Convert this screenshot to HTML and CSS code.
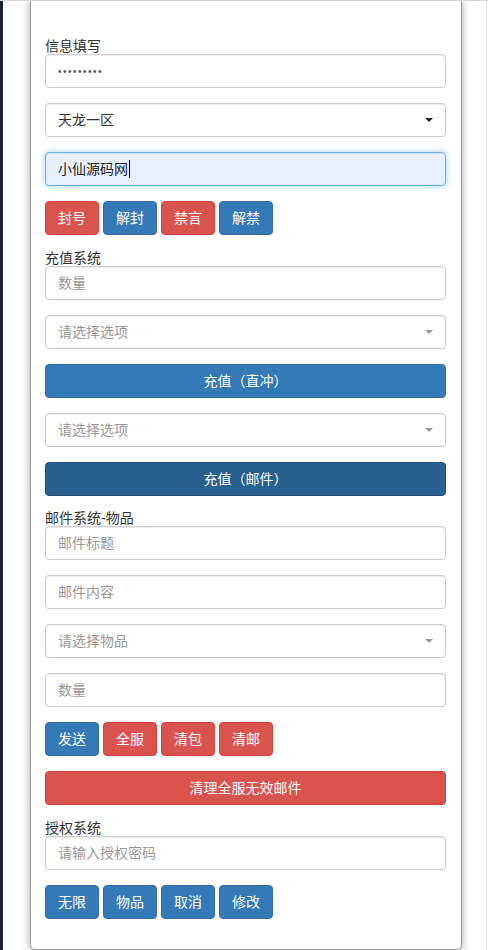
FILE: index.html
```html
<!DOCTYPE html>
<html lang="zh-CN">
<head>
<meta charset="utf-8">
<title>管理面板</title>
<link rel="stylesheet" href="styles.css">
</head>
<body>
<div class="card">
  <div class="section">
    <label class="label" for="pwd">信息填写</label>
    <div class="form-group">
      <input id="pwd" class="form-control pwd" type="password" value="123456789">
    </div>
    <div class="form-group select-wrap">
      <select class="form-control"><option>天龙一区</option></select>
    </div>
    <div class="form-group">
      <div class="form-control focused" role="textbox">小仙源码网<span class="caret"></span></div>
    </div>
    <div class="form-group btn-row">
      <button class="btn btn-danger">封号</button>
      <button class="btn btn-primary">解封</button>
      <button class="btn btn-danger">禁言</button>
      <button class="btn btn-primary">解禁</button>
    </div>
  </div>

  <div class="section">
    <label class="label">充值系统</label>
    <div class="form-group">
      <input class="form-control" type="text" placeholder="数量">
    </div>
    <div class="form-group select-wrap muted">
      <select class="form-control placeholder"><option>请选择选项</option></select>
    </div>
    <div class="form-group">
      <button class="btn btn-primary btn-block">充值（直冲）</button>
    </div>
    <div class="form-group select-wrap muted">
      <select class="form-control placeholder"><option>请选择选项</option></select>
    </div>
    <div class="form-group tight">
      <button class="btn btn-primary btn-block active">充值（邮件）</button>
    </div>
  </div>

  <div class="section">
    <label class="label">邮件系统-物品</label>
    <div class="form-group">
      <input class="form-control" type="text" placeholder="邮件标题">
    </div>
    <div class="form-group">
      <input class="form-control" type="text" placeholder="邮件内容">
    </div>
    <div class="form-group select-wrap muted">
      <select class="form-control placeholder"><option>请选择物品</option></select>
    </div>
    <div class="form-group">
      <input class="form-control" type="text" placeholder="数量">
    </div>
    <div class="form-group btn-row">
      <button class="btn btn-primary">发送</button>
      <button class="btn btn-danger">全服</button>
      <button class="btn btn-danger">清包</button>
      <button class="btn btn-danger">清邮</button>
    </div>
    <div class="form-group">
      <button class="btn btn-danger btn-block">清理全服无效邮件</button>
    </div>
  </div>

  <div class="section">
    <label class="label">授权系统</label>
    <div class="form-group">
      <input class="form-control" type="text" placeholder="请输入授权密码">
    </div>
    <div class="form-group btn-row">
      <button class="btn btn-primary">无限</button>
      <button class="btn btn-primary">物品</button>
      <button class="btn btn-primary">取消</button>
      <button class="btn btn-primary">修改</button>
    </div>
  </div>
</div>
</body>
</html>
```

FILE: styles.css
```css
* { box-sizing: border-box; }

html, body {
  margin: 0;
  padding: 0;
  height: 950px;
  overflow: hidden;
}

body {
  font-family: "Liberation Sans", "Noto Sans CJK SC", sans-serif;
  font-size: 14px;
  color: #333;
  border-top: 1px solid #d9d9d9;
  background: linear-gradient(to right, #1d2233 0 3px, #fff 3px 486px, #e4e4e4 486px 487px, #fff 487px);
}

.card {
  width: 432px;
  margin-left: 30px;
  background: #fff;
  border: 1px solid #9a9a9a;
  border-top: none;
  border-radius: 0 0 5px 5px;
  box-shadow: 0 0 9px rgba(0, 0, 0, 0.35);
  padding: 37px 15px 15px 14px;
}

.label {
  display: block;
  line-height: 16px;
  font-size: 14px;
  color: #333;
}

.form-group {
  margin-bottom: 15px;
}

.form-group.tight {
  margin-bottom: 14px;
}

.form-control {
  display: block;
  width: 100%;
  height: 34px;
  padding: 6px 12px;
  font-family: inherit;
  font-size: 14px;
  line-height: 20px;
  color: #555;
  background: #fff;
  border: 1px solid #ccc;
  border-radius: 4px;
  box-shadow: inset 0 1px 1px rgba(0, 0, 0, 0.075);
  outline: none;
}

.form-control::placeholder { color: #999; }

.pwd {
  letter-spacing: 1.5px;
  font-size: 10px;
}

.focused {
  color: #222;
  background: #e8f0fe;
  border-color: #66afe9;
  box-shadow: inset 0 1px 1px rgba(0, 0, 0, 0.075), 0 0 6px rgba(102, 175, 233, 0.6);
}

.caret {
  display: inline-block;
  width: 1px;
  height: 18px;
  background: #000;
  vertical-align: -4px;
  margin-left: 1px;
}

.select-wrap { position: relative; }

.select-wrap select {
  appearance: none;
  -webkit-appearance: none;
  color: #333;
}

.select-wrap select.placeholder { color: #999; }

.select-wrap::after {
  content: "";
  position: absolute;
  right: 13px;
  top: 15px;
  border-left: 4px solid transparent;
  border-right: 4px solid transparent;
  border-top: 4px solid #222;
  pointer-events: none;
}

.select-wrap.muted::after { border-top-color: #999; }

.btn-row {
  display: flex;
  gap: 4px;
}

.btn {
  display: inline-block;
  height: 34px;
  padding: 6px 12px;
  font-family: inherit;
  font-size: 14px;
  line-height: 20px;
  color: #fff;
  border: 1px solid transparent;
  border-radius: 4px;
  cursor: pointer;
}

.btn-primary {
  background: #337ab7;
  border-color: #2e6da4;
}

.btn-primary.active {
  background: #286090;
  border-color: #204d74;
}

.btn-danger {
  background: #d9534f;
  border-color: #d43f3a;
}

.btn-block {
  display: block;
  width: 100%;
}
```
